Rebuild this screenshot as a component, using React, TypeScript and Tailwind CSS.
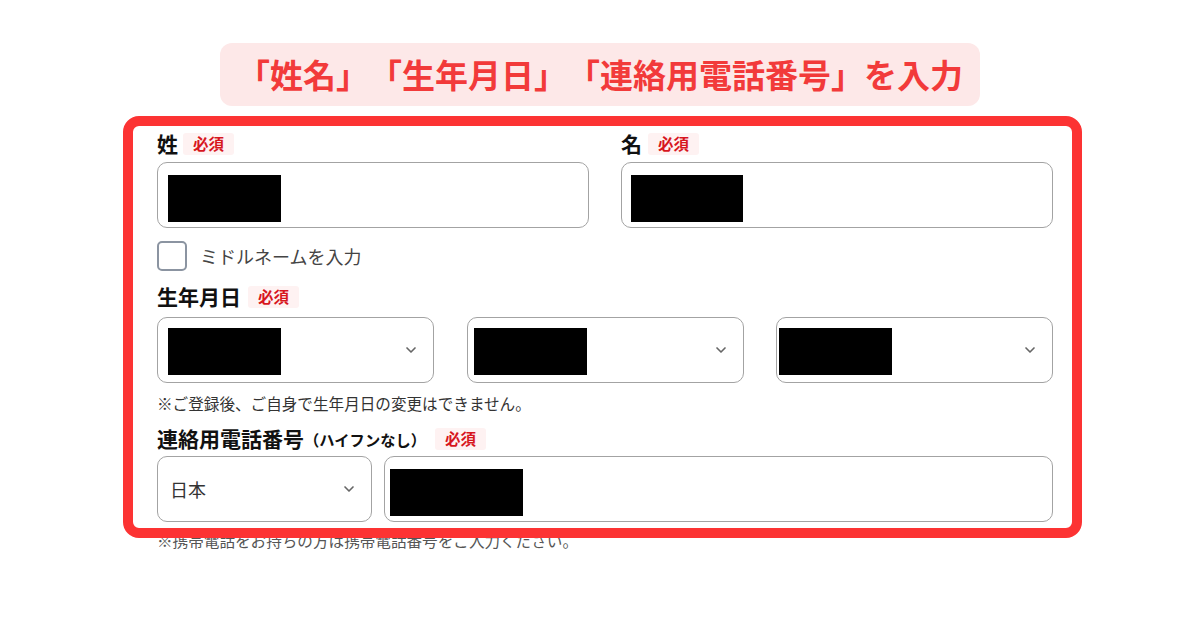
import { ChevronDown } from "lucide-react";

const jp = "font-['Noto_Sans_CJK_JP','Noto_Sans',sans-serif] [text-spacing-trim:space-all]";

function Badge({ className = "ml-[8px]" }: { className?: string }) {
  return (
    <span className={`${className} inline-flex h-[22px] items-center rounded-[3px] bg-[#fef2f2] px-[10px] text-[15.5px] font-bold text-[#d7161e]`}>
      必須
    </span>
  );
}

function Redacted({ w = 113, className = "" }: { w?: number; className?: string }) {
  return <div className={`h-[47px] bg-black ${className}`} style={{ width: w }} />;
}

function SelectBox({ offset }: { offset: string }) {
  return (
    <div className="flex h-[66px] w-[277px] items-start rounded-[10px] border border-[#a3a3a3] bg-white">
      <div className={`mt-[10px] ${offset}`}>
        <Redacted />
      </div>
      <ChevronDown className="ml-auto mr-[14px] mt-[24px] h-[16px] w-[16px] text-[#666]" strokeWidth={2.5} />
    </div>
  );
}

export default function App() {
  return (
    <div className={`relative h-[630px] w-[1200px] overflow-hidden bg-white ${jp}`}>
      {/* Title banner */}
      <div className="mx-auto mt-[43px] flex h-[63px] w-[760px] items-center justify-center rounded-[12px] bg-[#fde8e8]">
        <span className="text-[33px] font-bold text-[#f23a3a]">
          「姓名」「生年月日」「連絡用電話番号」を入力
        </span>
      </div>

      {/* Form */}
      <div className="ml-[157px] mt-[24px] w-[896px] text-[#111]">
        <div className="grid grid-cols-2 gap-x-[32px]">
          <div>
            <div className="flex h-[28px] items-center">
              <span className="text-[21px] font-bold">姓</span>
              <Badge className="ml-[5px]" />
            </div>
            <div className="mt-[4px] flex h-[66px] items-start rounded-[10px] border border-[#a3a3a3] pl-[10px] pt-[12px]">
              <Redacted w={113} className="h-[46px]" />
            </div>
          </div>
          <div>
            <div className="flex h-[28px] items-center">
              <span className="text-[21px] font-bold">名</span>
              <Badge className="ml-[6px]" />
            </div>
            <div className="mt-[4px] flex h-[66px] items-start rounded-[10px] border border-[#a3a3a3] pl-[9px] pt-[12px]">
              <Redacted w={112} className="h-[46px]" />
            </div>
          </div>
        </div>

        <label className="mt-[13px] flex h-[30px] items-center gap-[13px]">
          <span className="h-[30px] w-[30px] rounded-[5px] border-2 border-[#8b94a1] bg-white" />
          <span className="text-[18px] text-[#444]">ミドルネームを入力</span>
        </label>

        <div className="mt-[12px] flex h-[28px] items-center">
          <span className="text-[21px] font-bold">生年月日</span>
          <Badge className="ml-[7px]" />
        </div>
        <div className="mt-[6px] flex justify-between">
          <SelectBox offset="ml-[10px]" />
          <SelectBox offset="ml-[6px]" />
          <SelectBox offset="ml-[2px]" />
        </div>
        <p className="mt-[10px] h-[20px] text-[15.6px] leading-[20px] text-[#333]">
          ※ご登録後、ご自身で生年月日の変更はできません。
        </p>

        <div className="mt-[12px] flex h-[28px] items-center">
          <span className="text-[21px] font-bold">連絡用電話番号</span>
          <span className="text-[15.25px] font-bold">（ハイフンなし）</span>
          <Badge className="ml-[9px]" />
        </div>
        <div className="mt-[3px] flex gap-[12px]">
          <div className="flex h-[66px] w-[215px] items-center rounded-[10px] border border-[#a3a3a3] pl-[12px]">
            <span className="text-[18px] text-[#333]">日本</span>
            <ChevronDown className="ml-auto mr-[14px] h-[16px] w-[16px] text-[#666]" strokeWidth={2.5} />
          </div>
          <div className="flex h-[66px] flex-1 items-start rounded-[10px] border border-[#a3a3a3] pl-[5px] pt-[12px]">
            <Redacted w={133} className="h-[46px]" />
          </div>
        </div>
        <p className="mt-[8px] h-[20px] text-[15.6px] leading-[20px] text-[#555]">
          ※携帯電話をお持ちの方は携帯電話番号をご入力ください。
        </p>
      </div>

      {/* Highlight frame drawn over the form */}
      <div className="pointer-events-none absolute left-[123px] top-[116px] h-[422px] w-[959px] rounded-[16px] border-[10px] border-[#fc3333]" />
    </div>
  );
}
